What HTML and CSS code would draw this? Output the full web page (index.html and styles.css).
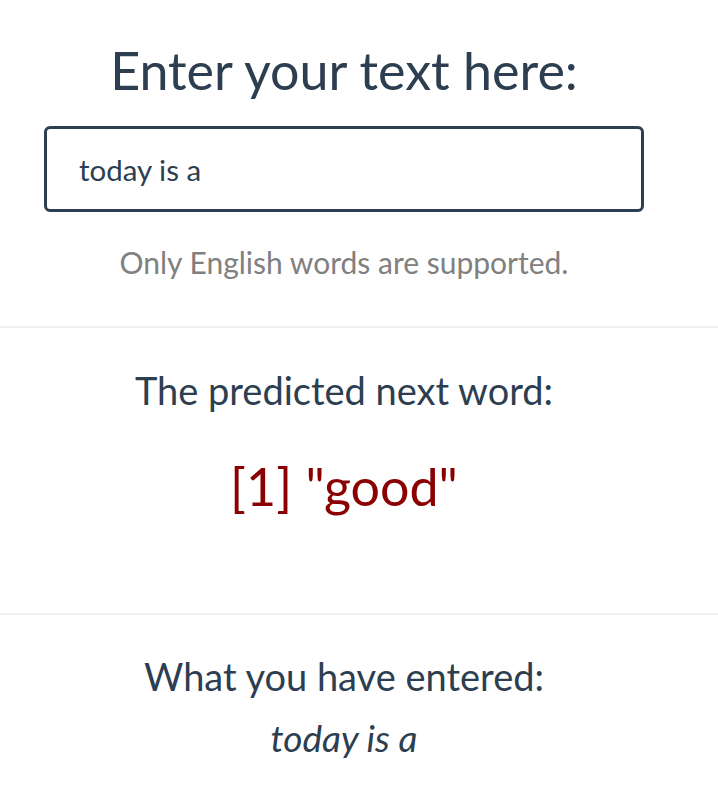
FILE: index.html
```html
<!DOCTYPE html>
<html>
<head>
<meta charset="utf-8">
<link rel="stylesheet" href="styles.css">
</head>
<body>
<div class="page">
  <section class="panel top">
    <h2 class="title">Enter your text here:</h2>
    <div class="field">today is a</div>
    <p class="help">Only English words are supported.</p>
  </section>
  <hr class="rule">
  <section class="panel mid">
    <h3 class="label">The predicted next word:</h3>
    <div class="prediction">[1] "good"</div>
  </section>
  <hr class="rule">
  <section class="panel bottom">
    <h3 class="label">What you have entered:</h3>
    <div class="entered">today is a</div>
  </section>
</div>
</body>
</html>
```

FILE: styles.css
```css
html, body {
  margin: 0;
  padding: 0;
  background: #ffffff;
}
body {
  font-family: Lato, "Open Sans", sans-serif;
  color: #2c3e50;
}
.page {
  width: 718px;
}
.panel {
  width: 688px;
  display: flex;
  flex-direction: column;
  align-items: center;
  text-align: center;
}
.title {
  margin: 38px 0 0 0;
  font-size: 52px;
  font-weight: 400;
  line-height: 64px;
}
.field {
  box-sizing: border-box;
  margin-top: 24px;
  width: 600px;
  height: 86px;
  border: 3px solid #2c3e50;
  border-radius: 6px;
  padding-left: 32px;
  display: flex;
  align-items: center;
  text-align: left;
  font-size: 29.5px;
}
.help {
  margin: 32px 0 0 0;
  font-size: 30px;
  line-height: 36px;
  color: #808080;
}
.rule {
  margin: 46px 0 0 0;
  border: 0;
  height: 2px;
  background: #ecf0f1;
  width: 718px;
}
.mid .label {
  margin-top: 40px;
}
.label {
  margin: 39px 0 0 0;
  font-size: 38px;
  font-weight: 400;
  line-height: 44px;
}
.prediction {
  margin-top: 44px;
  font-size: 52px;
  line-height: 60px;
  color: #8b0000;
  padding-bottom: 55px;
}
.mid + .rule {
  margin-top: 42px;
}
.entered {
  margin-top: 15px;
  font-size: 37px;
  font-style: italic;
  line-height: 50px;
}
```
